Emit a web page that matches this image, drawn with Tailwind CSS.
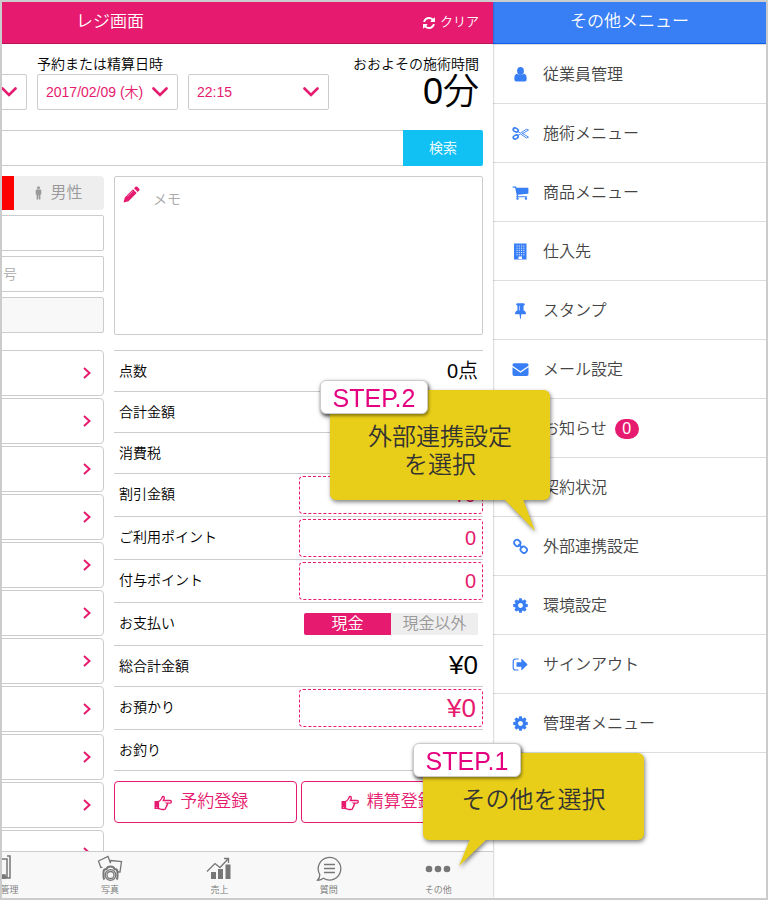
<!DOCTYPE html>
<html lang="ja">
<head>
    <meta charset="UTF-8">
    <meta name="viewport" content="width=device-width, initial-scale=1.0">
    <title>レジ画面</title>
    <script src="https://cdn.jsdelivr.net/npm/@tailwindcss/browser@4"></script>
</head>
<body class="font-['Liberation_Sans','Noto_Sans_CJK_JP',sans-serif] font-[350] text-sm text-black bg-white">
    <!-- Shared icons -->
    <svg class="hidden" xmlns="http://www.w3.org/2000/svg">
        <symbol id="chevron-down" viewBox="0 0 16 10"><path d="M1.500 1.500L8 8l6.500-6.500" fill="none" stroke="currentColor" stroke-width="2.600" stroke-linecap="round"/></symbol>
        <symbol id="chevron-right" viewBox="0 0 8 12"><path d="M1 1l5.500 5L1 11" fill="none" stroke="currentColor" stroke-width="2"/></symbol>
        <symbol id="cog" viewBox="0 0 1792 1792"><path d="M1152 896q0-106-75-181t-181-75-181 75-75 181 75 181 181 75 181-75 75-181zm512-109v222q0 12-8 23t-20 13l-185 28q-19 54-39 91 35 50 107 138 10 12 10 25t-9 23q-27 37-99 108t-94 71q-12 0-26-9l-138-108q-44 23-91 38-16 136-29 186-7 28-36 28h-222q-14 0-24.500-8.500t-11.500-21.500l-28-184q-49-16-90-37l-141 107q-10 9-25 9-14 0-25-11-126-114-165-168-7-10-7-23 0-12 8-23 15-21 51-66.500t54-70.500q-27-50-41-99l-183-27q-13-2-21-12.500t-8-23.500v-222q0-12 8-23t19-13l186-28q14-46 39-92-40-57-107-138-10-12-10-24 0-10 9-23 26-36 98.500-107.500t94.500-71.500q13 0 26 10l138 107q44-23 91-38 16-136 29-186 7-28 36-28h222q14 0 24.500 8.500t11.500 21.500l28 184q49 16 90 37l142-107q9-9 24-9 13 0 25 10 129 119 165 170 7 8 7 22 0 12-8 23-15 21-51 66.500t-54 70.500q26 50 41 98l183 28q13 2 21 12.500t8 23.500z" fill="currentColor"/></symbol>
        <symbol id="hand" viewBox="0 0 18 16"><path d="M.5 6h4v8h-4z" fill="currentColor"/><path d="M2.500 12.500h.6" stroke="#fff"/><path d="M4.500 6.500C6 6.300 7 4.500 7.800 3.200 8.200 2.400 8 1.500 9 1.500c1.500 0 1.600 1.600 1 2.600L9.300 5.500H16c1.800 0 1.800 2.600 0 2.600h-3.200c1 .6.9 1.900-.2 2.300.5 1-.1 1.700-.8 2 .1 1.300-.6 2.100-2 2.100H8c-1.300 0-2.200-1-3.500-1z" fill="none" stroke="currentColor" stroke-width="1.300"/></symbol>
    </svg>

    <div class="relative flex h-screen border-2 border-[#ccc] overflow-hidden">

        <!-- Register, pushed aside by the open menu -->
        <div class="relative z-10 flex flex-1 min-w-0 justify-end overflow-hidden bg-white shadow-[0_0_2px_rgba(0,0,0,0.4)]">
            <div class="flex flex-col w-[766px] shrink-0">
                <header class="grid grid-cols-3 items-center h-[42px] shrink-0 px-[14px] bg-[#e61a6e] border-b border-[#b8145a] text-white">
                    <h1 class="col-start-2 text-center text-[17px]">レジ画面</h1>
                    <button class="flex items-center justify-end gap-1 text-[13px]">
                        <svg class="w-[14px] h-[14px]" viewBox="0 0 1792 1792" fill="currentColor"><path d="M1639 1056q0 5-1 7-64 268-268 434.500t-478 166.500q-146 0-282.500-55t-243.500-157l-129 129q-19 19-45 19t-45-19-19-45v-448q0-26 19-45t45-19h448q26 0 45 19t19 45-19 45l-137 137q71 66 161 102t187 36q134 0 250-65t186-179q11-17 53-117 8-23 30-23h192q13 0 22.500 9.500t9.500 22.500zm25-800v448q0 26-19 45t-45 19h-448q-26 0-45-19t-19-45 19-45l138-138q-148-137-349-137-134 0-250 65t-186 179q-11 17-53 117-8 23-30 23h-199q-13 0-22.500-9.500t-9.500-22.500v-7q65-268 270-434.500t480-166.500q146 0 284 55.500t245 156.500l130-129q19-19 45-19t45 19 19 45z"/></svg>
                        クリア
                    </button>
                </header>

                <main class="flex-1 min-h-0 overflow-hidden px-[10px] pt-[10px]">
                    <div class="flex justify-end gap-[10px]">
                        <div class="grid w-[141px] pt-5">
                            <select aria-label="担当" class="col-start-1 row-start-1 h-9 px-2 appearance-none border border-[#ccc] rounded-xs text-[#e61a6e]"><option></option></select>
                            <svg class="col-start-1 row-start-1 self-center justify-self-end mr-[10px] w-4 h-[10px] text-[#e61a6e] pointer-events-none"><use href="#chevron-down"/></svg>
                        </div>
                        <div class="w-[141px]">
                            <label for="date" class="block h-5 leading-5 whitespace-nowrap">予約または精算日時</label>
                            <div class="grid">
                                <select id="date" class="col-start-1 row-start-1 h-9 px-2 appearance-none border border-[#ccc] rounded-xs text-[#e61a6e]"><option>2017/02/09 (木)</option></select>
                                <svg class="col-start-1 row-start-1 self-center justify-self-end mr-[10px] w-4 h-[10px] text-[#e61a6e] pointer-events-none"><use href="#chevron-down"/></svg>
                            </div>
                        </div>
                        <div class="grid w-[141px] pt-5">
                            <select aria-label="時刻" class="col-start-1 row-start-1 h-9 px-2 appearance-none border border-[#ccc] rounded-xs text-[#e61a6e]"><option>22:15</option></select>
                            <svg class="col-start-1 row-start-1 self-center justify-self-end mr-[10px] w-4 h-[10px] text-[#e61a6e] pointer-events-none"><use href="#chevron-down"/></svg>
                        </div>
                        <div class="w-36 pr-1 text-right">
                            <p class="h-5 leading-5">おおよその施術時間</p>
                            <p class="text-4xl leading-9">0分</p>
                        </div>
                    </div>

                    <div class="flex h-9 mt-5">
                        <input type="search" aria-label="検索" class="flex-1 px-2 border border-r-0 border-[#ccc] rounded-l-xs">
                        <button class="w-20 bg-[#11c1f3] text-white rounded-r-xs">検索</button>
                    </div>

                    <div class="grid grid-cols-[1fr_369px] gap-[10px] mt-[10px]">
                        <section>
                            <div class="flex flex-col gap-[5px]">
                                <div class="flex justify-end h-[34px] text-base">
                                    <button aria-label="女性" class="w-[90px] bg-[#f00] rounded-l-sm"></button>
                                    <button class="flex items-center justify-center gap-2 w-[90px] bg-[#eee] text-[#999] rounded-r-sm">
                                        <svg class="w-[7px] h-[14px]" viewBox="0 0 7 14" fill="currentColor"><circle cx="3.500" cy="1.700" r="1.500"/><path d="M1.700 3.600h3.600q1 0 1 1v3.900h-.9v5H3.800v-4h-.6v4H1.600v-5H.7V4.600q0-1 1-1z"/></svg>
                                        男性
                                    </button>
                                </div>
                                <input aria-label="お名前" class="h-9 px-2 border border-[#ccc] rounded-xs">
                                <input aria-label="電話番号" placeholder="電話番号" class="self-end w-[151px] h-9 px-2 border border-l-0 border-[#ccc] rounded-r-xs placeholder:text-[#aaa]">
                                <input aria-label="会員" disabled class="h-9 px-2 bg-[#f8f8f8] border border-[#ccc] rounded-xs">
                            </div>
                            <div class="flex flex-col gap-[2px] mt-[17px] text-[#e61a6e]">
                                <button aria-label="明細1" class="flex items-center justify-end h-[46px] pr-3 border border-[#ccc] rounded-sm"><svg class="w-2 h-3"><use href="#chevron-right"/></svg></button>
                                <button aria-label="明細2" class="flex items-center justify-end h-[46px] pr-3 border border-[#ccc] rounded-sm"><svg class="w-2 h-3"><use href="#chevron-right"/></svg></button>
                                <button aria-label="明細3" class="flex items-center justify-end h-[46px] pr-3 border border-[#ccc] rounded-sm"><svg class="w-2 h-3"><use href="#chevron-right"/></svg></button>
                                <button aria-label="明細4" class="flex items-center justify-end h-[46px] pr-3 border border-[#ccc] rounded-sm"><svg class="w-2 h-3"><use href="#chevron-right"/></svg></button>
                                <button aria-label="明細5" class="flex items-center justify-end h-[46px] pr-3 border border-[#ccc] rounded-sm"><svg class="w-2 h-3"><use href="#chevron-right"/></svg></button>
                                <button aria-label="明細6" class="flex items-center justify-end h-[46px] pr-3 border border-[#ccc] rounded-sm"><svg class="w-2 h-3"><use href="#chevron-right"/></svg></button>
                                <button aria-label="明細7" class="flex items-center justify-end h-[46px] pr-3 border border-[#ccc] rounded-sm"><svg class="w-2 h-3"><use href="#chevron-right"/></svg></button>
                                <button aria-label="明細8" class="flex items-center justify-end h-[46px] pr-3 border border-[#ccc] rounded-sm"><svg class="w-2 h-3"><use href="#chevron-right"/></svg></button>
                                <button aria-label="明細9" class="flex items-center justify-end h-[46px] pr-3 border border-[#ccc] rounded-sm"><svg class="w-2 h-3"><use href="#chevron-right"/></svg></button>
                                <button aria-label="明細10" class="flex items-center justify-end h-[46px] pr-3 border border-[#ccc] rounded-sm"><svg class="w-2 h-3"><use href="#chevron-right"/></svg></button>
                                <button aria-label="明細11" class="flex items-center justify-end h-[46px] pr-3 border border-[#ccc] rounded-sm"><svg class="w-2 h-3"><use href="#chevron-right"/></svg></button>
                            </div>
                        </section>

                        <section>
                            <div class="grid">
                                <textarea aria-label="メモ" placeholder="メモ" class="col-start-1 row-start-1 h-[159px] pl-[38px] pt-3 leading-5 resize-none border border-[#ccc] rounded-xs placeholder:text-[#aaa]"></textarea>
                                <svg class="col-start-1 row-start-1 ml-[9px] mt-[10px] w-[17px] h-[17px] text-[#e61a6e] pointer-events-none" viewBox="0 0 17 17" fill="currentColor"><path d="M.5 16.500l1.300-5L10 3.300l3.700 3.700-8.200 8.200zM11 2.300l1.500-1.500q.9-.8 1.800 0l1.900 1.900q.8.900 0 1.800L14.700 6z"/><path d="M4.500 10.500l5.500-5.500" stroke="#fff" stroke-width=".4"/></svg>
                            </div>

                            <div class="mt-[15px] border-t border-[#ccc]">
                                <div class="flex items-center justify-between h-[41px] px-[5px] border-b border-[#ccc]"><span>点数</span><span class="text-xl">0点</span></div>
                                <div class="flex items-center h-[41px] px-[5px] border-b border-[#ccc]">合計金額</div>
                                <div class="flex items-center h-[41px] px-[5px] border-b border-[#ccc]">消費税</div>
                                <div class="flex items-center justify-between h-[43px] pl-[5px] border-b border-[#ccc]"><label for="discount" class="pb-[2px]">割引金額</label><input id="discount" value="¥0" class="w-[184px] h-[38px] px-[6px] text-right text-xl text-[#e61a6e] border border-dashed border-[#e61a6e] rounded-sm"></div>
                                <div class="flex items-center justify-between h-[43px] pl-[5px] border-b border-[#ccc]"><label for="use-point" class="pb-[2px]">ご利用ポイント</label><input id="use-point" value="0" class="w-[184px] h-[38px] px-[6px] text-right text-xl text-[#e61a6e] border border-dashed border-[#e61a6e] rounded-sm"></div>
                                <div class="flex items-center justify-between h-[43px] pl-[5px] border-b border-[#ccc]"><label for="add-point" class="pb-[2px]">付与ポイント</label><input id="add-point" value="0" class="w-[184px] h-[38px] px-[6px] text-right text-xl text-[#e61a6e] border border-dashed border-[#e61a6e] rounded-sm"></div>
                                <div class="flex items-center justify-between h-[43px] px-[5px] border-b border-[#ccc]">
                                    <span class="pb-[2px]">お支払い</span>
                                    <div class="flex w-[174px] h-[22px] text-base leading-[22px] rounded-xs overflow-hidden">
                                        <button class="flex-1 bg-[#e61a6e] text-white">現金</button>
                                        <button class="flex-1 bg-[#eee] text-[#999]">現金以外</button>
                                    </div>
                                </div>
                                <div class="flex items-center justify-between h-[41px] px-[5px] border-b border-[#ccc]"><span>総合計金額</span><span class="text-[26px]">¥0</span></div>
                                <div class="flex items-center justify-between h-[43px] pl-[5px] border-b border-[#ccc]"><label for="deposit" class="pb-[2px]">お預かり</label><input id="deposit" value="¥0" class="w-[184px] h-[38px] px-[6px] text-right text-[26px] text-[#e61a6e] border border-dashed border-[#e61a6e] rounded-sm"></div>
                                <div class="flex items-center h-[41px] px-[5px] border-b border-[#ccc]">お釣り</div>
                            </div>

                            <div class="grid grid-cols-2 gap-1 mt-[10px] text-[17px] text-[#e61a6e]">
                                <button class="flex items-center justify-center gap-2 h-[42px] pr-2 pt-px border border-[#e61a6e] rounded-sm"><svg class="w-[18px] h-4"><use href="#hand"/></svg>予約登録</button>
                                <button class="flex items-center justify-center gap-2 h-[42px] pr-2 pt-px border border-[#e61a6e] rounded-sm"><svg class="w-[18px] h-4"><use href="#hand"/></svg>精算登録</button>
                            </div>
                        </section>
                    </div>
                </main>

                <nav class="grid grid-cols-7 h-[47px] shrink-0 bg-[#f8f8f8] border-t border-[#ccc] text-[9px] leading-3 text-[#777]">
                    <a href="#" class="col-start-3 flex flex-col items-center pt-[3px]">
                        <svg class="w-7 h-7 mb-px" viewBox="0 0 28 28" fill="none" stroke="currentColor" stroke-width="1.500"><path d="M4 4h16v18H4zM20 1h3v22H6"/><path d="M6 20h12v3H6z" fill="currentColor"/></svg>
                        顧客管理
                    </a>
                    <a href="#" class="flex flex-col items-center pt-[3px]">
                        <svg class="w-7 h-7 mb-px" viewBox="0 0 28 28" fill="none" stroke="currentColor" stroke-width="1.300"><path d="M5 13L2.500 6l9.500-4.500 2.600 6.800M6.500 12.500L4.800 12M14 8l1-2.500 10.500 1L24 17h-2.500"/><path d="M8.500 24.500q-1-1-1-3v-4.500q0-3 3-3 .8-2.500 4-2.500t4 2.500q3 0 3 3v4.500q0 2-1 3" stroke-width="2"/><circle cx="14.500" cy="20" r="5.300" fill="#f8f8f8"/><circle cx="14.500" cy="20" r="3.500"/></svg>
                        写真
                    </a>
                    <a href="#" class="flex flex-col items-center pt-[3px]">
                        <svg class="w-7 h-7 mb-px" viewBox="0 0 28 28" fill="none" stroke="currentColor" stroke-width="1.300"><path d="M2 16.500l8-8 5 4 8-8.500M19 3.500h4.500V8"/><path d="M6 17h5v7H6zM13 14h5v10h-5zM20.500 9.500h5V24h-5z" fill="currentColor" stroke="none"/></svg>
                        売上
                    </a>
                    <a href="#" class="flex flex-col items-center pt-[3px]">
                        <svg class="w-7 h-7 mb-px" viewBox="0 0 28 28" fill="none" stroke="currentColor" stroke-width="1.300"><path d="M4.800 19.500A11.300 11.300 0 1 1 8.500 23.300Q5.500 25.500 2.500 25.200q2.600-2.700 2.300-5.700z"/><path d="M9 9.500h11M9 13.500h11M9 17.500h11"/></svg>
                        質問
                    </a>
                    <a href="#" class="flex flex-col items-center pt-[3px]">
                        <svg class="w-7 h-7 mb-px" viewBox="0 0 28 28" fill="currentColor"><circle cx="5" cy="14" r="3.300"/><circle cx="14" cy="14" r="3.300"/><circle cx="23" cy="14" r="3.300"/></svg>
                        その他
                    </a>
                </nav>
            </div>
        </div>

        <!-- Side menu -->
        <aside class="w-[273px] shrink-0 bg-white">
            <h2 class="flex items-center justify-center h-[42px] bg-[#387ef5] border-b border-[#0c60ee] text-[17px] text-white">その他メニュー</h2>
            <nav class="flex flex-col border-t border-[#ddd] text-base text-[#444]">
                <a href="#" class="flex items-center gap-[14px] h-[59px] pt-px pl-[19px] border-b border-[#ddd]">
                    <svg class="w-[17px] h-[17px] text-[#387ef5]" viewBox="0 0 17 17" fill="currentColor"><ellipse cx="8.500" cy="5" rx="3.400" ry="3.900"/><path d="M5 7.800q3.500 2.600 7 0 2.700.5 2.700 5.200 0 2.500-2 2.500H4.300q-2 0-2-2.500 0-4.700 2.700-5.200z"/></svg>
                    従業員管理
                </a>
                <a href="#" class="flex items-center gap-[14px] h-[59px] pt-px pl-[19px] border-b border-[#ddd]">
                    <svg class="w-[17px] h-[17px] text-[#387ef5]" viewBox="0 0 17 17" fill="none" stroke="currentColor"><ellipse cx="3.700" cy="5" rx="2.600" ry="1.800" transform="rotate(25 3.700 5)" stroke-width="1.600"/><ellipse cx="3.700" cy="12" rx="2.600" ry="1.800" transform="rotate(-25 3.700 12)" stroke-width="1.600"/><path d="M5.800 6.500L8.500 8l6-3.800 2 .8-6.500 4M5.800 10.500L8.500 9l6 4 2-.8L10 8" stroke-width=".9"/></svg>
                    施術メニュー
                </a>
                <a href="#" class="flex items-center gap-[14px] h-[59px] pt-px pl-[19px] border-b border-[#ddd]">
                    <svg class="w-[17px] h-[17px] text-[#387ef5]" viewBox="0 0 1792 1792" fill="currentColor"><path d="M704 1536q0 52-38 90t-90 38-90-38-38-90 38-90 90-38 90 38 38 90zm896 0q0 52-38 90t-90 38-90-38-38-90 38-90 90-38 90 38 38 90zm128-1088v512q0 24-16.500 42.500t-40.500 21.500l-1044 122q13 60 13 70 0 16-24 64h920q26 0 45 19t19 45-19 45-45 19h-1024q-26 0-45-19t-19-45q0-11 8-31.500t16-36 21.500-40 15.500-29.500l-177-823h-204q-26 0-45-19t-19-45 19-45 45-19h256q16 0 28.500 6.500t19.500 15.500 13 24.500 8 26 5.500 29.500 4.500 26h1201q26 0 45 19t19 45z"/></svg>
                    商品メニュー
                </a>
                <a href="#" class="flex items-center gap-[14px] h-[59px] pt-px pl-[19px] border-b border-[#ddd]">
                    <svg class="w-[17px] h-[17px] text-[#387ef5]" viewBox="0 0 17 17"><path d="M2 .5h12.500v16H2z" fill="currentColor"/><path d="M4.500 3h8M4.500 5.200h8M4.500 7.400h8M4.500 9.600h8M4.500 11.800h8" stroke="#fff" stroke-width=".9" stroke-dasharray="1.100 1.150"/><path d="M6.500 13.500h3.500V16H6.500z" fill="#fff"/></svg>
                    仕入先
                </a>
                <a href="#" class="flex items-center gap-[14px] h-[59px] pt-px pl-[19px] border-b border-[#ddd]">
                    <svg class="w-[17px] h-[17px] text-[#387ef5]" viewBox="0 0 1792 1792" fill="currentColor"><path d="M800 864v-448q0-14-9-23t-23-9-23 9-9 23v448q0 14 9 23t23 9 23-9 9-23zm672 352q0 26-19 45t-45 19h-429l-51 483q-2 12-10.500 20.500t-20.500 8.500h-1q-27 0-32-27l-76-485h-404q-26 0-45-19t-19-45q0-123 78.500-221.500t177.500-98.500v-512q-52 0-90-38t-38-90 38-90 90-38h640q52 0 90 38t38 90-38 90-90 38v512q99 0 177.500 98.500t78.500 221.500z"/></svg>
                    スタンプ
                </a>
                <a href="#" class="flex items-center gap-[14px] h-[59px] pt-px pl-[19px] border-b border-[#ddd]">
                    <svg class="w-[17px] h-[17px] text-[#387ef5]" viewBox="0 0 17 17" fill="currentColor"><path d="M.5 4q0-1.700 1.700-1.700h12.600q1.700 0 1.700 1.700v.7L8.500 10.200.5 4.700z"/><path d="M.5 6.200l8 5.500 8-5.500v7q0 1.700-1.700 1.700H2.200q-1.700 0-1.700-1.700z"/></svg>
                    メール設定
                </a>
                <a href="#" class="flex items-center h-[59px] pt-px pl-[50px] border-b border-[#ddd]">
                    お知らせ
                    <span class="ml-2 w-6 h-5 leading-5 text-center text-white bg-[#e61a6e] rounded-full">0</span>
                </a>
                <a href="#" class="flex items-center h-[59px] pt-px pl-[50px] border-b border-[#ddd]">契約状況</a>
                <a href="#" class="flex items-center gap-[14px] h-[59px] pt-px pl-[19px] border-b border-[#ddd]">
                    <svg class="w-[17px] h-[17px] text-[#387ef5]" viewBox="0 0 17 17" fill="none" stroke="currentColor" stroke-width="1.800"><rect x="2" y="2" width="6.500" height="5.800" rx="2.800" transform="rotate(45 5.250 4.900)"/><rect x="8.500" y="8.800" width="6.500" height="5.800" rx="2.800" transform="rotate(45 11.750 11.700)"/><path d="M6.500 6.200l4 4"/></svg>
                    外部連携設定
                </a>
                <a href="#" class="flex items-center gap-[14px] h-[59px] pt-px pl-[19px] border-b border-[#ddd]">
                    <svg class="w-[17px] h-[17px] text-[#387ef5]"><use href="#cog"/></svg>
                    環境設定
                </a>
                <a href="#" class="flex items-center gap-[14px] h-[59px] pt-px pl-[19px] border-b border-[#ddd]">
                    <svg class="w-[17px] h-[17px] text-[#387ef5]" viewBox="0 0 17 17" fill="currentColor"><path d="M6.500 3H3.700Q1.200 3 1.200 5.500v6Q1.200 14 3.700 14h2.800" fill="none" stroke="currentColor" stroke-width="1.200"/><path d="M5 6.200h4.300V3.300q0-.9.700-.3l5.200 5q.5.500 0 1L10 14q-.7.600-.7-.3v-2.900H5q-.5 0-.5-.5V6.700q0-.5.5-.5z"/></svg>
                    サインアウト
                </a>
                <a href="#" class="flex items-center gap-[14px] h-[59px] pt-px pl-[19px] border-b border-[#ddd]">
                    <svg class="w-[17px] h-[17px] text-[#387ef5]"><use href="#cog"/></svg>
                    管理者メニュー
                </a>
            </nav>
        </aside>

        <!-- Step callouts -->
        <div class="absolute z-20 top-[388px] right-[216px] w-[220px] drop-shadow-[1px_2px_2px_rgba(0,0,0,0.5)]">
            <p class="flex items-center justify-center h-[110px] pt-3 bg-[#e8ce18] rounded-md text-2xl leading-7 text-center text-[#333]">外部連携設定<br>を選択</p>
            <svg class="absolute top-[109px] left-[174px] w-8 h-8" viewBox="0 0 32 32"><path d="M0 0h19l12 32z" fill="#e8ce18"/></svg>
            <span class="absolute -top-[10px] -left-[10px] w-[108px] h-[34px] leading-[34px] text-center text-[25px] text-[#e4007f] bg-white border border-[#ccc] rounded-md shadow-[1px_2px_3px_rgba(0,0,0,0.4)]">STEP.2</span>
        </div>
        <div class="absolute z-20 top-[751px] right-[122px] w-[221px] drop-shadow-[1px_2px_2px_rgba(0,0,0,0.5)]">
            <p class="flex items-center justify-center h-[87px] pt-[6px] bg-[#e8ce18] rounded-md text-2xl leading-7 text-center text-[#333]">その他を選択</p>
            <svg class="absolute top-[86px] left-[36px] w-8 h-7" viewBox="0 0 32 28"><path d="M11 0h17L0 27z" fill="#e8ce18"/></svg>
            <span class="absolute -top-[10px] -left-[10px] w-[108px] h-[34px] leading-[34px] text-center text-[25px] text-[#e4007f] bg-white border border-[#ccc] rounded-md shadow-[1px_2px_3px_rgba(0,0,0,0.4)]">STEP.1</span>
        </div>
    </div>
</body>
</html>
